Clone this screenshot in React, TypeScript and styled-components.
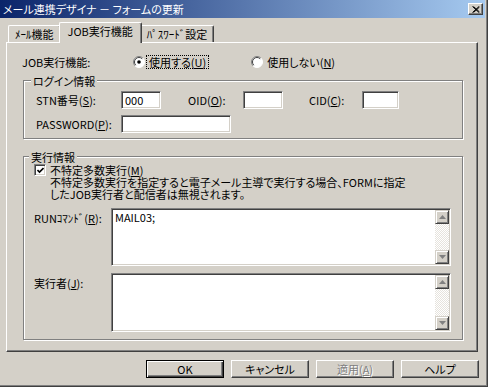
import React from 'react';
import styled, { createGlobalStyle } from 'styled-components';

const GlobalStyle = createGlobalStyle`
  html, body {
    margin: 0;
    padding: 0;
    background: #d4d0c8;
  }
  body {
    font-family: "Noto Sans CJK JP", "Noto Sans", sans-serif;
    font-size: 11px;
    color: #000;
  }
  * {
    box-sizing: border-box;
  }
`;

const Window = styled.div`
  width: 488px;
  height: 387px;
  background: #d4d0c8;
  border-right: 1px solid #404040;
  border-bottom: 1px solid #404040;
  box-shadow: inset -1px -1px 0 #808080;
  display: flex;
  flex-direction: column;
  font-feature-settings: "palt";
  overflow: hidden;
`;

const TitleBar = styled.div`
  height: 18px;
  margin-right: 2px;
  padding: 0 2px 0 3px;
  display: flex;
  align-items: center;
  justify-content: space-between;
  background: linear-gradient(to right, #0a246a, #a6caf0);
  color: #fff;
  line-height: 18px;
  white-space: pre;
`;

const CloseButton = styled.div`
  width: 15px;
  height: 12px;
  display: flex;
  align-items: center;
  justify-content: center;
  background: #d4d0c8;
  border: 1px solid;
  border-color: #fff #404040 #404040 #fff;
  box-shadow: inset -1px -1px 0 #808080;
`;

const Body = styled.div`
  padding: 4px 0 0 6px;
  display: flex;
  flex-direction: column;
`;

const TabStrip = styled.div`
  height: 20px;
  padding-left: 2px;
  display: flex;
  align-items: flex-end;
  position: relative;
  z-index: 1;
`;

const Tab = styled.div<{ $active?: boolean }>`
  height: ${({ $active }) => ($active ? '21px' : '17px')};
  margin: ${({ $active }) => ($active ? '0 -2px -1px' : '0')};
  padding: ${({ $active }) => ($active ? '1px 8px 0' : '1px 6px 0')};
  position: relative;
  z-index: ${({ $active }) => ($active ? 2 : 0)};
  background: #d4d0c8;
  border-top: 1px solid #fff;
  border-left: 1px solid #fff;
  border-right: 1px solid #404040;
  border-radius: 2px 2px 0 0;
  box-shadow: inset -1px 0 0 #808080;
  line-height: 14px;
  white-space: nowrap;
`;

const Panel = styled.div`
  width: 472px;
  height: 310px;
  border: 1px solid;
  border-color: #fff #404040 #404040 #fff;
  box-shadow: inset -1px -1px 0 #808080;
  padding: 13px 14px 0 15px;
  display: flex;
  flex-direction: column;
`;

const RadioRow = styled.div`
  height: 12px;
  display: flex;
  align-items: center;
  line-height: 12px;
`;

const FieldLabel = styled.span<{ $w?: number; $ml?: number }>`
  width: ${({ $w }) => ($w ? `${$w}px` : 'auto')};
  margin-left: ${({ $ml }) => $ml ?? 0}px;
  flex-shrink: 0;
  white-space: nowrap;
  line-height: 12px;
`;

const RadioOption = styled.label<{ $ml?: number }>`
  display: flex;
  align-items: center;
  margin-left: ${({ $ml }) => $ml ?? 0}px;
`;

const OptionText = styled.span<{ $focus?: boolean }>`
  margin-left: 1px;
  padding: 0 2px;
  line-height: 12px;
  border: 1px dotted ${({ $focus }) => ($focus ? '#000' : 'transparent')};
  white-space: nowrap;
`;

const GroupBox = styled.div<{ $mt: number; $pl: number }>`
  margin: ${({ $mt }) => $mt}px 0 0 1px;
  border: 1px solid #808080;
  box-shadow: inset 1px 1px 0 #fff, 1px 1px 0 #fff;
  padding: 0 10px 0 ${({ $pl }) => $pl}px;
  display: flex;
  flex-direction: column;
`;

const Caption = styled.div`
  width: fit-content;
  margin: -6px 0 0 -${'5'}px;
  padding: 0 2px;
  background: #d4d0c8;
  line-height: 12px;
`;

const FormRow = styled.div<{ $mt: number }>`
  margin-top: ${({ $mt }) => $mt}px;
  display: flex;
  align-items: center;
`;

const TextInput = styled.div<{ $w: number }>`
  width: ${({ $w }) => $w}px;
  height: 18px;
  flex-shrink: 0;
  background: #fff;
  border: 1px solid;
  border-color: #808080 #fff #fff #808080;
  box-shadow: inset 1px 1px 0 #404040, inset -1px -1px 0 #d4d0c8;
  padding: 2px 3px 0;
  line-height: 12px;
`;

const CheckRow = styled.div`
  margin-top: 1px;
  display: flex;
  align-items: center;
  line-height: 12px;
`;

const CheckBox = styled.div`
  width: 12px;
  height: 12px;
  margin-right: 4px;
  background: #fff;
  border: 1px solid;
  border-color: #808080 #fff #fff #808080;
  box-shadow: inset 1px 1px 0 #404040, inset -1px -1px 0 #d4d0c8;
  display: flex;
  align-items: center;
  justify-content: center;
`;

const Description = styled.div`
  margin-left: 16px;
  line-height: 12px;
  white-space: nowrap;
`;

const AreaRow = styled.div<{ $mt: number }>`
  margin-top: ${({ $mt }) => $mt}px;
  display: flex;
  align-items: flex-start;
`;

const AreaLabel = styled.span`
  width: 77px;
  padding-top: 4px;
  line-height: 12px;
  white-space: nowrap;
`;

const TextArea = styled.div<{ $h: number }>`
  width: 340px;
  height: ${({ $h }) => $h}px;
  background: #fff;
  border: 1px solid;
  border-color: #808080 #fff #fff #808080;
  box-shadow: inset 1px 1px 0 #404040, inset -1px -1px 0 #d4d0c8;
  padding: 1px;
  display: flex;
`;

const AreaText = styled.div`
  flex: 1;
  padding: 1px 2px;
  line-height: 12px;
`;

const ScrollBar = styled.div`
  width: 14px;
  display: flex;
  flex-direction: column;
`;

const ScrollTrack = styled.div`
  flex: 1;
  background: repeating-conic-gradient(#fff 0 25%, #e6e3dd 0 50%) 0 0 / 2px 2px;
`;

const ArrowButton = styled.div`
  height: 14px;
  background: #d4d0c8;
  border: 1px solid;
  border-color: #d4d0c8 #404040 #404040 #d4d0c8;
  box-shadow: inset 1px 1px 0 #fff, inset -1px -1px 0 #808080;
  display: flex;
  align-items: center;
  justify-content: center;
`;

const ButtonRow = styled.div`
  margin-top: 8px;
  padding-right: 8px;
  display: flex;
  justify-content: flex-end;
  gap: 7px;
`;

const Button = styled.div<{ $default?: boolean; $disabled?: boolean }>`
  width: 78px;
  height: 18px;
  display: flex;
  align-items: center;
  justify-content: center;
  background: #d4d0c8;
  border: 1px solid;
  border-color: ${({ $default }) => ($default ? '#000' : '#fff #404040 #404040 #fff')};
  box-shadow: ${({ $default }) =>
    $default
      ? 'inset 1px 1px 0 #fff, inset -1px -1px 0 #404040, inset -2px -2px 0 #808080'
      : 'inset -1px -1px 0 #808080'};
  color: ${({ $disabled }) => ($disabled ? '#808080' : '#000')};
  text-shadow: ${({ $disabled }) => ($disabled ? '1px 1px 0 #fff' : 'none')};
  line-height: 12px;
`;

const Radio: React.FC<{ checked?: boolean }> = ({ checked }) => (
  <svg width="12" height="12" viewBox="0 0 12 12">
    <circle cx="6" cy="6" r="5.5" fill="#fff" />
    <path d="M2.1 9.9 A5.5 5.5 0 0 1 9.9 2.1" fill="none" stroke="#808080" />
    <path d="M2.8 9.2 A4.5 4.5 0 0 1 9.2 2.8" fill="none" stroke="#404040" />
    <path d="M9.9 2.1 A5.5 5.5 0 0 1 2.1 9.9" fill="none" stroke="#fff" />
    {checked && <circle cx="6" cy="6" r="1.8" fill="#000" />}
  </svg>
);

const Arrow: React.FC<{ down?: boolean }> = ({ down }) => (
  <svg width="7" height="4" viewBox="0 0 7 4">
    <path d={down ? 'M0 0 H7 L3.5 4 Z' : 'M0 4 H7 L3.5 0 Z'} fill="#808080" />
  </svg>
);

const Scroller: React.FC = () => (
  <ScrollBar>
    <ArrowButton>
      <Arrow />
    </ArrowButton>
    <ScrollTrack />
    <ArrowButton>
      <Arrow down />
    </ArrowButton>
  </ScrollBar>
);

const App: React.FC = () => {
  return (
    <>
      <GlobalStyle />
      <Window>
        <TitleBar>
          <span>メール連携デザイナ － フォームの更新</span>
          <CloseButton>
            <svg width="8" height="7" viewBox="0 0 8 7">
              <path d="M0.5 0.5 L7 6.5 M1.5 0.5 L7.5 6 M7 0.5 L0.5 6.5 M7.5 1 L1.5 6.5" stroke="#000" strokeWidth="1" />
            </svg>
          </CloseButton>
        </TitleBar>

        <Body>
          <TabStrip>
            <Tab>ﾒｰﾙ機能</Tab>
            <Tab $active>JOB実行機能</Tab>
            <Tab>ﾊﾟｽﾜｰﾄﾞ設定</Tab>
          </TabStrip>

          <Panel>
            <RadioRow>
              <FieldLabel $w={111}>JOB実行機能:</FieldLabel>
              <RadioOption>
                <Radio checked />
                <OptionText $focus>使用する(<u>U</u>)</OptionText>
              </RadioOption>
              <RadioOption $ml={42}>
                <Radio />
                <OptionText>使用しない(<u>N</u>)</OptionText>
              </RadioOption>
            </RadioRow>

            <GroupBox $mt={12} $pl={12}>
              <Caption>ログイン情報</Caption>
              <FormRow $mt={4}>
                <FieldLabel $w={85}>STN番号(<u>S</u>):</FieldLabel>
                <TextInput $w={40}>000</TextInput>
                <FieldLabel $w={55} $ml={27}>OID(<u>O</u>):</FieldLabel>
                <TextInput $w={40} />
                <FieldLabel $w={53} $ml={26}>CID(<u>C</u>):</FieldLabel>
                <TextInput $w={37} />
              </FormRow>
              <FormRow $mt={6}>
                <FieldLabel $w={85}>PASSWORD(<u>P</u>):</FieldLabel>
                <TextInput $w={110} />
              </FormRow>
              <div style={{ height: 5 }} />
            </GroupBox>

            <GroupBox $mt={17} $pl={10}>
              <Caption>実行情報</Caption>
              <CheckRow>
                <CheckBox>
                  <svg width="7" height="7" viewBox="0 0 7 7">
                    <path d="M0.5 3 L2.5 5 L6.5 1" fill="none" stroke="#000" strokeWidth="1.6" />
                  </svg>
                </CheckBox>
                <span>不特定多数実行(<u>M</u>)</span>
              </CheckRow>
              <Description>
                不特定多数実行を指定すると電子メール主導で実行する場合、FORMに指定
                <br />
                したJOB実行者と配信者は無視されます。
              </Description>
              <AreaRow $mt={8}>
                <AreaLabel>RUNｺﾏﾝﾄﾞ(<u>R</u>):</AreaLabel>
                <TextArea $h={58}>
                  <AreaText>MAIL03;</AreaText>
                  <Scroller />
                </TextArea>
              </AreaRow>
              <AreaRow $mt={7}>
                <AreaLabel>実行者(<u>J</u>):</AreaLabel>
                <TextArea $h={59}>
                  <AreaText />
                  <Scroller />
                </TextArea>
              </AreaRow>
              <div style={{ height: 7 }} />
            </GroupBox>
          </Panel>
        </Body>

        <ButtonRow>
          <Button $default>OK</Button>
          <Button>キャンセル</Button>
          <Button $disabled>適用(<u>A</u>)</Button>
          <Button>ヘルプ</Button>
        </ButtonRow>
      </Window>
    </>
  );
};

export default App;
